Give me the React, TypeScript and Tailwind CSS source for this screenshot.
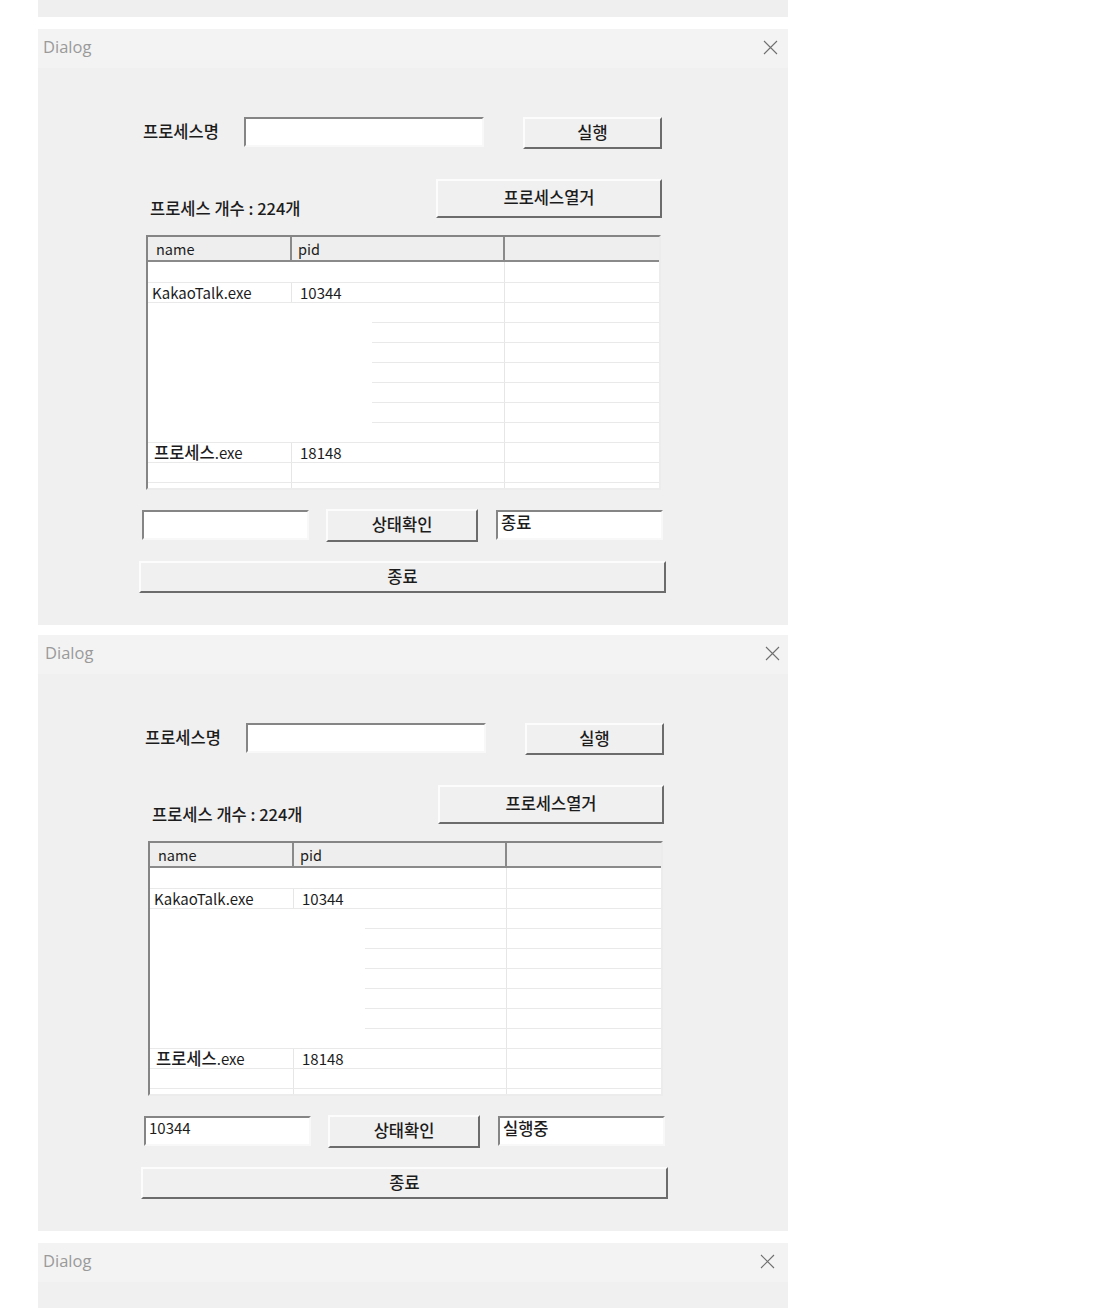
import React from 'react'

type Row = { h: string; name: React.ReactNode; pid: string; vline: boolean; line: 'full' | 'part' | 'none'; pad?: string }

const rows: Row[] = [
  { h: 'h-[21px]', name: '', pid: '', vline: false, line: 'full' },
  { h: 'h-[20px]', name: 'KakaoTalk.exe', pid: '10344', vline: true, line: 'full' },
  { h: 'h-[20px]', name: '', pid: '', vline: false, line: 'part' },
  { h: 'h-[20px]', name: '', pid: '', vline: false, line: 'part' },
  { h: 'h-[20px]', name: '', pid: '', vline: false, line: 'part' },
  { h: 'h-[20px]', name: '', pid: '', vline: false, line: 'part' },
  { h: 'h-[20px]', name: '', pid: '', vline: false, line: 'part' },
  { h: 'h-[20px]', name: '', pid: '', vline: false, line: 'part' },
  { h: 'h-[20px]', name: '', pid: '', vline: false, line: 'full' },
  {
    h: 'h-[20px]',
    name: (
      <>
        <span className="text-[16.5px] font-medium">프로세스</span>.exe
      </>
    ),
    pid: '18148',
    vline: true,
    line: 'full',
    pad: 'pl-[6px]',
  },
  { h: 'h-[20px]', name: '', pid: '', vline: true, line: 'full' },
  { h: 'flex-1', name: '', pid: '', vline: true, line: 'none' },
]

function CloseIcon() {
  return (
    <svg width="15" height="15" viewBox="0 0 15 15" fill="none" stroke="#6f6f6f" strokeWidth="1.1">
      <path d="M1 1 L14 14 M14 1 L1 14" />
    </svg>
  )
}

function Sunken({ value, className }: { value?: string; className: string }) {
  return (
    <div className={`h-[30px] border-2 border-t-[#858585] border-l-[#858585] border-r-[#f8f8f8] border-b-[#f8f8f8] bg-white px-[3px] leading-[20px] text-[#1c1c1c] ${className}`}>
      {value}
    </div>
  )
}

function Btn({ label, className }: { label: string; className: string }) {
  return (
    <div className={`flex items-center justify-center border-2 border-t-[#fcfcfc] border-l-[#fcfcfc] border-r-[#6c6c6c] border-b-[#6c6c6c] bg-[#f0f0f0] pb-[2px] text-[16.5px] font-medium text-[#1c1c1c] ${className}`}>
      {label}
    </div>
  )
}

function ListView({ partial }: { partial: string }) {
  return (
    <div className="flex h-[255px] w-[515px] flex-col overflow-hidden border-2 border-t-[#858585] border-l-[#858585] border-r-[#ececec] border-b-[#ececec] bg-white text-[15px] text-[#1c1c1c]">
      <div className="flex h-[25px] shrink-0 border-b-2 border-[#8a8a8a] bg-[#eeeeee] text-[14.5px] leading-[23px]">
        <div className="w-[144px] border-r-2 border-[#8a8a8a] pl-[8px]">name</div>
        <div className="w-[213px] border-r-2 border-[#8a8a8a] pl-[6px]">pid</div>
        <div className="flex-1" />
      </div>
      {rows.map((r, i) => (
        <div key={i} className={`flex shrink-0 flex-col ${r.h}`}>
          <div className="flex flex-1 leading-[19px]">
            <div className={`w-[144px] ${r.pad ?? 'pl-[4px]'} ${r.vline ? 'border-r border-[#e6e6e6]' : 'border-r border-transparent'}`}>{r.name}</div>
            <div className="w-[213px] border-r border-[#e6e6e6] pl-[8px]">{r.pid}</div>
            <div className="flex-1" />
          </div>
          {r.line === 'full' && <div className="h-px bg-[#e9e9e9]" />}
          {r.line === 'part' && <div className={`h-px bg-[#e9e9e9] ${partial}`} />}
        </div>
      ))}
    </div>
  )
}

function TitleBar({ pl, pr }: { pl: string; pr: string }) {
  return (
    <div className={`flex h-[39px] items-center justify-between bg-[#f3f3f3] pb-[3px] ${pl} ${pr}`}>
      <span className="font-['Open_Sans',sans-serif] text-[16.5px] text-[#9a9a9a]">Dialog</span>
      <CloseIcon />
    </div>
  )
}

function Dialog({ pid, status, shift }: { pid: string; status: string; shift: boolean }) {
  return (
    <div className="w-[750px] bg-[#f0f0f0]">
      <TitleBar pl={shift ? 'pl-[7px]' : 'pl-[5px]'} pr={shift ? 'pr-[8px]' : 'pr-[10px]'} />
      <div className={`flex flex-col pt-[49px] pb-[32px] text-[16.5px] text-[#1c1c1c] ${shift ? 'pl-[103px]' : 'pl-[101px]'}`}>
        <div className="flex items-start">
          <div className="ml-[4px] flex h-[28px] w-[101px] items-center font-medium">프로세스명</div>
          <Sunken className="w-[240px]" />
          <Btn label="실행" className="ml-[39px] h-[32px] w-[139px]" />
        </div>
        <div className="mt-[30px] flex items-end">
          <div className="ml-[11px] w-[286px] font-medium leading-[20px]">프로세스 개수 : 224개</div>
          <Btn label="프로세스열거" className="h-[39px] w-[226px]" />
        </div>
        <div className="ml-[7px] mt-[17px]">
          <ListView partial={shift ? 'ml-[215px]' : 'ml-[224px]'} />
        </div>
        <div className="mt-[19px] flex items-start">
          <Sunken value={pid} className="ml-[3px] mt-[1px] w-[167px] text-[15px]" />
          <Btn label="상태확인" className="ml-[17px] h-[33px] w-[152px]" />
          <Sunken value={status} className="ml-[18px] mt-[1px] w-[167px] text-[16.5px] font-medium" />
        </div>
        <Btn label="종료" className="mt-[19px] h-[32px] w-[527px]" />
      </div>
    </div>
  )
}

export default function App() {
  return (
    <div className="h-[1308px] overflow-hidden bg-white pl-[38px] font-['Noto_Sans_CJK_KR',sans-serif]">
      <div className="h-[17px] w-[750px] bg-[#efefef]" />
      <div className="mt-[12px]">
        <Dialog pid="" status="종료" shift={false} />
      </div>
      <div className="mt-[10px]">
        <Dialog pid="10344" status="실행중" shift={true} />
      </div>
      <div className="mt-[12px] h-[65px] w-[750px] bg-[#f0f0f0]">
        <TitleBar pl="pl-[5px]" pr="pr-[13px]" />
      </div>
    </div>
  )
}
